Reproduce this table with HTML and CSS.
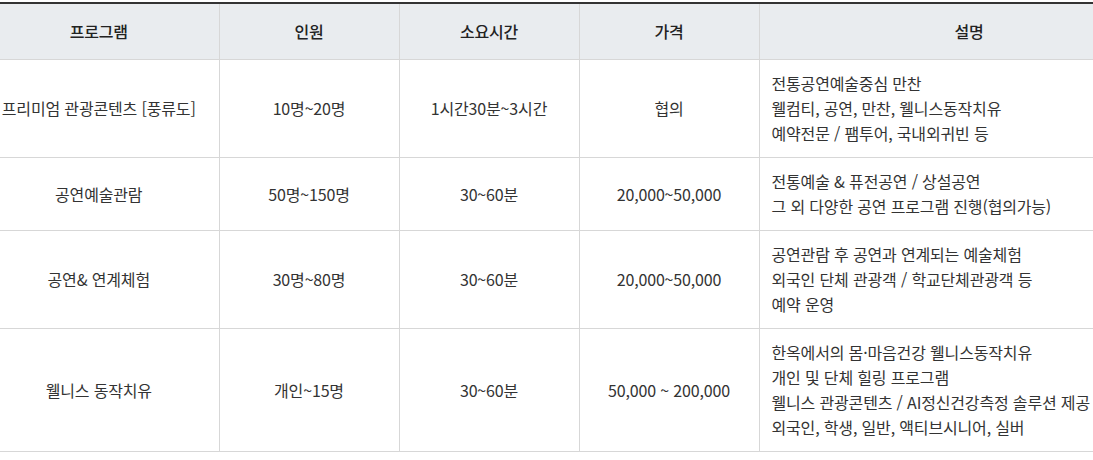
FILE: index.html
```html
<!DOCTYPE html>
<html lang="ko">
<head>
<meta charset="utf-8">
<title>프로그램 안내</title>
<link rel="stylesheet" href="styles.css">
</head>
<body>
<div class="wrap">
<table class="prog-table">
  <colgroup>
    <col class="c-prog">
    <col class="c-mid">
    <col class="c-mid">
    <col class="c-mid">
    <col class="c-desc">
  </colgroup>
  <thead>
    <tr>
      <th>프로그램</th>
      <th>인원</th>
      <th>소요시간</th>
      <th>가격</th>
      <th>설명</th>
    </tr>
  </thead>
  <tbody>
    <tr>
      <td>프리미엄 관광콘텐츠 [풍류도]</td>
      <td>10명~20명</td>
      <td>1시간30분~3시간</td>
      <td>협의</td>
      <td class="desc">전통공연예술중심 만찬<br>웰컴티, 공연, 만찬, 웰니스동작치유<br>예약전문 / 팸투어, 국내외귀빈 등</td>
    </tr>
    <tr>
      <td>공연예술관람</td>
      <td>50명~150명</td>
      <td>30~60분</td>
      <td>20,000~50,000</td>
      <td class="desc">전통예술 &amp; 퓨전공연 / 상설공연<br>그 외 다양한 공연 프로그램 진행(협의가능)</td>
    </tr>
    <tr>
      <td>공연&amp; 연계체험</td>
      <td>30명~80명</td>
      <td>30~60분</td>
      <td>20,000~50,000</td>
      <td class="desc">공연관람 후 공연과 연계되는 예술체험<br>외국인 단체 관광객 / 학교단체관광객 등<br>예약 운영</td>
    </tr>
    <tr>
      <td>웰니스 동작치유</td>
      <td>개인~15명</td>
      <td>30~60분</td>
      <td>50,000 ~ 200,000</td>
      <td class="desc">한옥에서의 몸·마음건강 웰니스동작치유<br>개인 및 단체 힐링 프로그램<br>웰니스 관광콘텐츠 / AI정신건강측정 솔루션 제공<br>외국인, 학생, 일반, 액티브시니어, 실버</td>
    </tr>
  </tbody>
</table>
</div>
</body>
</html>
```

FILE: styles.css
```css
html, body {
  margin: 0;
  padding: 0;
  background: #fff;
}
body {
  overflow: hidden;
  font-family: "Noto Sans CJK KR", "Noto Sans", sans-serif;
  color: #333;
}
.wrap {
  padding-top: 2px;
}
.prog-table {
  width: 1200px;
  margin-left: -21px;
  border-collapse: collapse;
  table-layout: fixed;
  border-top: 2px solid #333;
  font-size: 16px;
  line-height: 25px;
  letter-spacing: -0.01em;
}
.c-prog { width: 240px; }
.c-mid { width: 180px; }
.c-desc { width: 420px; }
.prog-table th,
.prog-table td {
  border: 1px solid #d7d7d7;
  text-align: center;
  vertical-align: middle;
  padding: 11px 12px;
}
.prog-table th {
  background: #e9ecef;
  font-weight: 500;
  color: #222;
  padding: 15px 12px;
  border-top: 0;
}
.prog-table tr > :first-child { border-left: 0; }
.prog-table td.desc {
  text-align: left;
}
```
